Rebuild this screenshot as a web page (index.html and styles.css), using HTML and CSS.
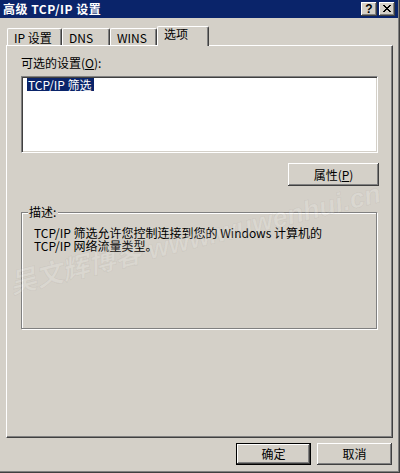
FILE: index.html
```html
<!DOCTYPE html>
<html lang="zh-CN">
<head>
<meta charset="utf-8">
<title>高级 TCP/IP 设置</title>
<link rel="stylesheet" href="styles.css">
</head>
<body>
<div class="window">
  <div class="titlebar">
    <span class="title">高级 TCP/IP 设置</span>
    <div class="caption-btns">
      <span class="cbtn help">?</span>
      <span class="cbtn close">
        <svg width="8" height="7" viewBox="0 0 8 7"><path d="M0 0h2v1h1v1h2v-1h1v-1h2v1h-1v1h-1v1h-1v1h1v1h1v1h1v1h-2v-1h-1v-1h-2v1h-1v1h-2v-1h1v-1h1v-1h1v-1h-1v-1h-1v-1h-1z" fill="#000"/></svg>
      </span>
    </div>
  </div>
  <div class="main">
    <div class="tabs">
      <div class="tab t1">IP 设置</div>
      <div class="tab t2">DNS</div>
      <div class="tab t3">WINS</div>
      <div class="tab t4 active">选项</div>
    </div>
    <div class="panel">
      <div class="label">可选的设置(<u>O</u>):</div>
      <div class="listbox"><span class="item selected">TCP/IP 筛选</span></div>
      <div class="btn-row"><button class="btn props">属性(<u>P</u>)</button></div>
      <div class="group">
        <div class="legend">描述:</div>
        <p class="desc">TCP/IP 筛选允许您控制连接到您的 Windows 计算机的<br>TCP/IP 网络流量类型。</p>
      </div>
    </div>
    <div class="footer">
      <button class="btn default">确定</button>
      <button class="btn">取消</button>
    </div>
  </div>
  <div class="watermark">吴文辉博客 www.wuwenhui.cn</div>
</div>
</body>
</html>
```
FILE: styles.css
```css
* { box-sizing: border-box; }
body {
  margin: 0;
  font-family: "Noto Sans CJK SC", "Liberation Sans", sans-serif;
  font-size: 12px;
  line-height: 12px;
  color: #000;
}
.window {
  position: relative;
  width: 400px;
  height: 473px;
  background: #d4d0c8;
  overflow: hidden;
  box-shadow: inset -1px -1px #404040, inset -2px -2px #808080;
}
.titlebar {
  height: 18px;
  margin-right: 2px;
  background: #0a246a;
  color: #fff;
  display: flex;
  align-items: center;
  justify-content: space-between;
  padding: 0 3px 0 3px;
}
.title {
  font-weight: bold;
  font-size: 12px;
  letter-spacing: 0.5px;
}
.caption-btns { display: flex; gap: 2px; }
.cbtn {
  width: 16px;
  height: 14px;
  background: #d4d0c8;
  box-shadow: inset -1px -1px #404040, inset 1px 1px #fff, inset -2px -2px #808080;
  display: flex;
  align-items: center;
  justify-content: center;
  color: #000;
  font-family: "Liberation Sans", sans-serif;
  font-weight: bold;
  font-size: 12px;
  line-height: 12px;
  padding-bottom: 1px;
}
.main { padding: 8px 0 0 6px; }
.tabs {
  display: flex;
  align-items: flex-end;
  height: 20px;
  margin-left: 1px;
  margin-bottom: -1px;
  position: relative;
  z-index: 1;
}
.tab {
  height: 17px;
  margin-bottom: 1px;
  border-top: 1px solid #fff;
  border-left: 1px solid #fff;
  border-right: 1px solid #404040;
  border-radius: 2px 2px 0 0;
  box-shadow: inset -1px 0 #808080;
  padding: 3px 0 0 6px;
  white-space: nowrap;
}
.t1 { width: 55px; }
.t2 { width: 48px; }
.t3 { width: 47px; }
.t4 { width: 52px; }
.tab.active {
  height: 20px;
  margin-bottom: 0;
  padding-top: 1px;
  background: #d4d0c8;
}
.panel {
  width: 387px;
  height: 393px;
  border-top: 1px solid #fff;
  border-left: 1px solid #fff;
  border-right: 1px solid #404040;
  border-bottom: 1px solid #404040;
  box-shadow: inset -1px -1px #808080;
  padding: 11px 14px 0 14px;
}
.label { height: 12px; }
.listbox {
  margin-top: 7px;
  width: 357px;
  height: 77px;
  background: #fff;
  border: 1px solid;
  border-color: #808080 #fff #fff #808080;
  box-shadow: inset 1px 1px #404040, inset -1px -1px #d4d0c8;
  padding: 1px 0 0 5px;
}
.item {
  display: inline-block;
  height: 13px;
  line-height: 13px;
  padding: 0 2px 0 1px;
}
.item.selected { background: #0a246a; color: #fff; }
.btn-row {
  display: flex;
  justify-content: flex-end;
  margin-top: 10px;
  margin-right: -1px;
}
.btn {
  font: inherit;
  color: #000;
  background: #d4d0c8;
  border: 0;
  margin: 0;
  padding: 0;
  height: 22px;
  width: 75px;
  box-shadow: inset -1px -1px #404040, inset 1px 1px #fff, inset -2px -2px #808080;
  line-height: 12px;
}
.btn.props { width: 91px; height: 23px; }
.btn.default {
  border: 1px solid #000;
  box-shadow: inset -1px -1px #404040, inset 1px 1px #fff, inset -2px -2px #808080;
}
.group {
  margin-top: 26px;
  width: 356px;
  height: 117px;
  border: 1px solid #808080;
  box-shadow: inset 1px 1px #fff, 1px 1px 0 #fff;
}
.legend {
  width: fit-content;
  margin: -7px 0 0 6px;
  padding: 0 2px 0 1px;
  background: #d4d0c8;
  line-height: 12px;
}
.desc {
  margin: 8px 0 0 12px;
  line-height: 13px;
}
.footer {
  display: flex;
  justify-content: flex-end;
  gap: 6px;
  margin-top: 5px;
  padding-right: 8px;
}
.watermark {
  position: absolute;
  left: 10px;
  top: 270px;
  transform: rotate(-14deg);
  transform-origin: left center;
  font-family: "Liberation Sans", "Noto Sans CJK SC", sans-serif;
  font-size: 27px;
  line-height: 30px;
  font-weight: bold;
  font-style: italic;
  white-space: nowrap;
  color: rgba(255, 255, 255, 0.18);
  -webkit-text-stroke: 1px rgba(110, 100, 90, 0.08);
  pointer-events: none;
}
```
